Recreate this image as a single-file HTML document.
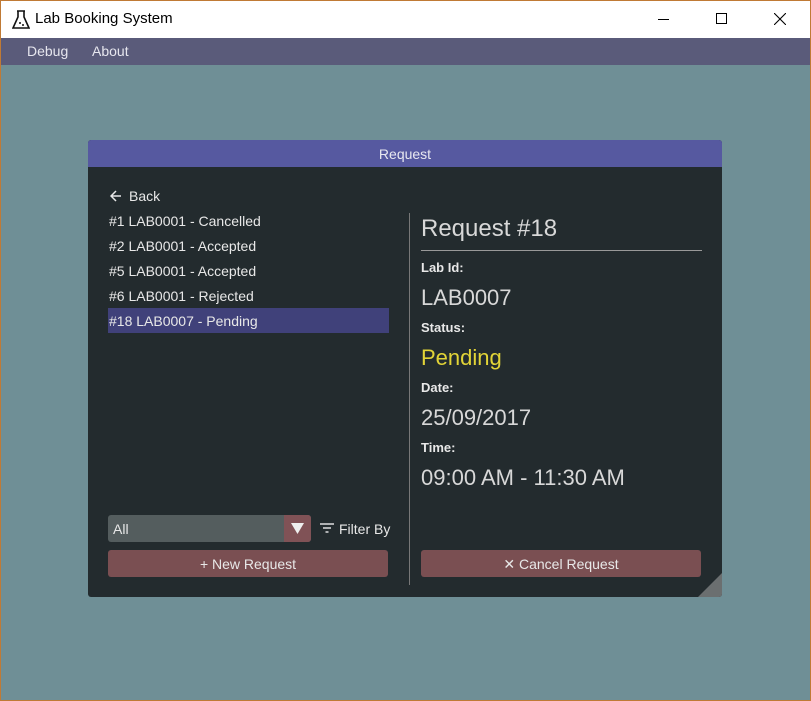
<!DOCTYPE html>
<html><head><style>
*{margin:0;padding:0;box-sizing:border-box}
body{width:811px;height:701px;overflow:hidden;background:#6f8f96;font-family:"Liberation Sans",sans-serif;position:relative}
.abs{position:absolute}
#frame{left:0;top:0;width:811px;height:701px;border:1px solid #c07a35}
#title{left:1px;top:1px;width:809px;height:37px;background:#fff}
#menu{left:1px;top:38px;width:809px;height:27px;background:#5a5b7a;color:#e6e6ee;font-size:14px}
.t{color:#e8e8e8;font-size:14px;white-space:nowrap}
.lbl{color:#e8e8e8;font-size:13px;font-weight:bold}
.big{color:#d8d8d8;font-size:22px;white-space:nowrap}
</style></head><body>
<div id="title" class="abs">
<svg class="abs" style="left:11px;top:9px" width="18" height="20" viewBox="0 0 18 20"><path d="M5 1h8M6 1v6L1 18h16L12 7V1" fill="none" stroke="#111" stroke-width="1.6"/><circle cx="8" cy="13" r="1" fill="#111"/><circle cx="11" cy="15" r="1" fill="#111"/></svg>
<div class="abs" style="left:34px;top:9px;font-size:15px;color:#000">Lab Booking System</div>
<div class="abs" style="left:657px;top:18px;width:11px;height:1px;background:#000"></div>
<div class="abs" style="left:715px;top:12px;width:11px;height:11px;border:1px solid #000"></div>
<svg class="abs" style="left:773px;top:12px" width="12" height="12"><path d="M0 0L12 12M12 0L0 12" stroke="#000" stroke-width="1.1"/></svg>
</div>
<div id="menu" class="abs"><span class="abs" style="left:26px;top:5px">Debug</span><span class="abs" style="left:91px;top:5px">About</span></div>
<div class="abs" style="left:88px;top:140px;width:634px;height:457px;background:#232b2e;border-radius:3px;overflow:hidden">
<div class="abs" style="left:0;top:0;width:634px;height:27px;background:#5659a0;color:#e8e8f0;font-size:14px;text-align:center;line-height:28px">Request</div>
<svg class="abs" style="left:22px;top:50px" width="12" height="12"><path d="M11 6H1M6 1L1 6l5 5" fill="none" stroke="#e8e8e8" stroke-width="1.5"/></svg>
<div class="abs t" style="left:41px;top:48px">Back</div>
<div class="abs t" style="left:21px;top:73px">#1 LAB0001 - Cancelled</div>
<div class="abs t" style="left:21px;top:98px">#2 LAB0001 - Accepted</div>
<div class="abs t" style="left:21px;top:123px">#5 LAB0001 - Accepted</div>
<div class="abs t" style="left:21px;top:148px">#6 LAB0001 - Rejected</div>
<div class="abs" style="left:20px;top:168px;width:281px;height:25px;background:#40417a"></div>
<div class="abs t" style="left:21px;top:173px">#18 LAB0007 - Pending</div>
<div class="abs" style="left:321px;top:73px;width:1px;height:372px;background:#777"></div>
<div class="abs" style="left:20px;top:375px;width:203px;height:27px;background:#545d5e;border-radius:3px"></div>
<div class="abs" style="left:196px;top:375px;width:27px;height:27px;background:#805256;border-radius:0 3px 3px 0"></div>
<svg class="abs" style="left:203px;top:383px" width="13" height="11"><path d="M0 0h13L6.5 11z" fill="#eee"/></svg>
<div class="abs t" style="left:25px;top:381px">All</div>
<svg class="abs" style="left:232px;top:383px" width="14" height="10"><path d="M0 1h14M3 5h8M5.5 9h3" stroke="#ddd" stroke-width="1.5"/></svg>
<div class="abs t" style="left:251px;top:381px">Filter By</div>
<div class="abs t" style="left:20px;top:410px;width:280px;height:27px;background:#7a4f52;border-radius:3px;text-align:center;line-height:28px">+ New Request</div>
<div class="abs t" style="left:333px;top:410px;width:280px;height:27px;background:#7a4f52;border-radius:3px;text-align:center;line-height:28px">✕ Cancel Request</div>
<div class="abs big" style="left:333px;top:75px;font-size:24px">Request #18</div>
<div class="abs" style="left:333px;top:110px;width:281px;height:1px;background:#999"></div>
<div class="abs lbl" style="left:333px;top:120px">Lab Id:</div>
<div class="abs big" style="left:333px;top:145px">LAB0007</div>
<div class="abs lbl" style="left:333px;top:180px">Status:</div>
<div class="abs big" style="left:333px;top:205px;color:#e2d437">Pending</div>
<div class="abs lbl" style="left:333px;top:240px">Date:</div>
<div class="abs big" style="left:333px;top:265px">25/09/2017</div>
<div class="abs lbl" style="left:333px;top:300px">Time:</div>
<div class="abs big" style="left:333px;top:325px">09:00 AM - 11:30 AM</div>
<svg class="abs" style="left:610px;top:433px" width="24" height="24"><path d="M24 0V24H0z" fill="#6b6f70"/></svg>
</div>
<div id="frame" class="abs"></div>
</body></html>
